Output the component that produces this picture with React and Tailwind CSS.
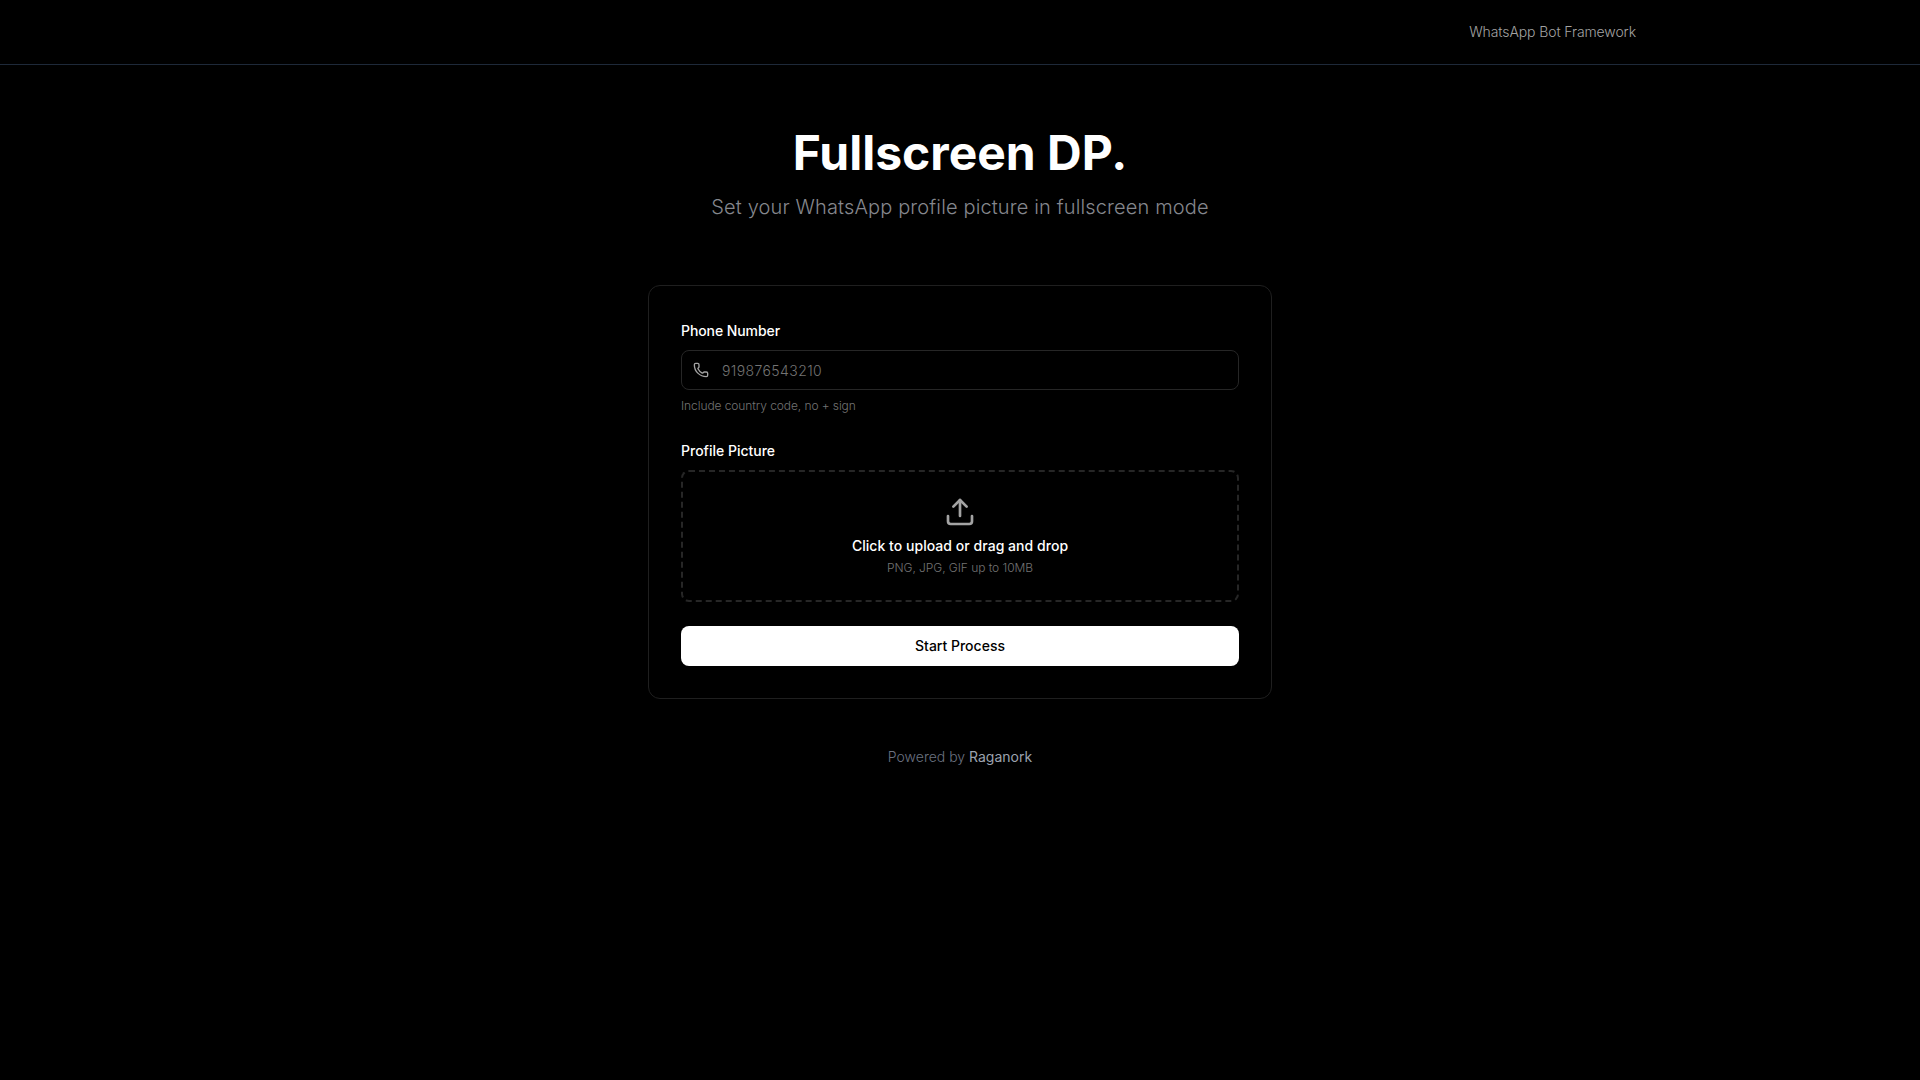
import { Phone, Upload } from "lucide-react"

export default function App() {
  return (
    <div className="min-h-screen bg-black text-white font-['Inter',sans-serif]">

      {/* header */}
      <header className="border-b border-[#1e2939]">
        <div className="max-w-[1400px] mx-auto px-6 h-16 flex items-center justify-end">
          <span className="text-sm font-light tracking-[-0.1px] text-[#a3a3a3]">WhatsApp Bot Framework</span>
        </div>
      </header>

      <main className="max-w-2xl mx-auto px-6 pt-16 pb-12">

        <div className="text-center mb-16">
          <h1 className="text-5xl leading-none font-bold mb-4">Fullscreen DP.</h1>
          <p className="text-xl leading-7 font-light tracking-[0.14px] text-[#85878d]">
            Set your WhatsApp profile picture in fullscreen mode
          </p>
        </div>

        {/* form card */}
        <div className="rounded-xl border border-[#1f1f1f] p-8">

          <div className="mb-6">
            <label className="block pt-[2px] text-sm leading-[22px] font-medium tracking-[-0.08px] mb-2">Phone Number</label>
            <div className="relative">
              <Phone size={16} className="absolute left-3 top-3 text-[#a3a3a3]" />
              <input
                placeholder="919876543210"
                className="w-full h-10 rounded-lg bg-black border border-[#262626] pl-10 pr-4 text-sm font-light tracking-[0.4px] text-white placeholder:text-[#737373] outline-none"
              />
            </div>
            <p className="mt-2 text-xs font-light tracking-[-0.08px] text-[#737373]">Include country code, no + sign</p>
          </div>

          <div className="mb-6">
            <label className="block pt-[2px] text-sm leading-[22px] font-medium mb-2">Profile Picture</label>
            <div className="rounded-lg border-2 border-dashed border-[#262626] py-6 flex flex-col items-center">
              <Upload size={32} className="text-[#a3a3a3] mb-2" />
              <p className="text-sm font-medium tracking-[0.04px] mb-1">Click to upload or drag and drop</p>
              <p className="text-xs font-light tracking-[-0.05px] text-[#737373]">PNG, JPG, GIF up to 10MB</p>
            </div>
          </div>

          <button className="w-full h-10 rounded-lg bg-white text-black text-sm font-medium">
            Start Process
          </button>

        </div>

        <p className="mt-12 text-center text-sm font-light text-[#6b7280]">
          Powered by <span className="text-[#9ca3af] font-normal">Raganork</span>
        </p>

      </main>
    </div>
  )
}
